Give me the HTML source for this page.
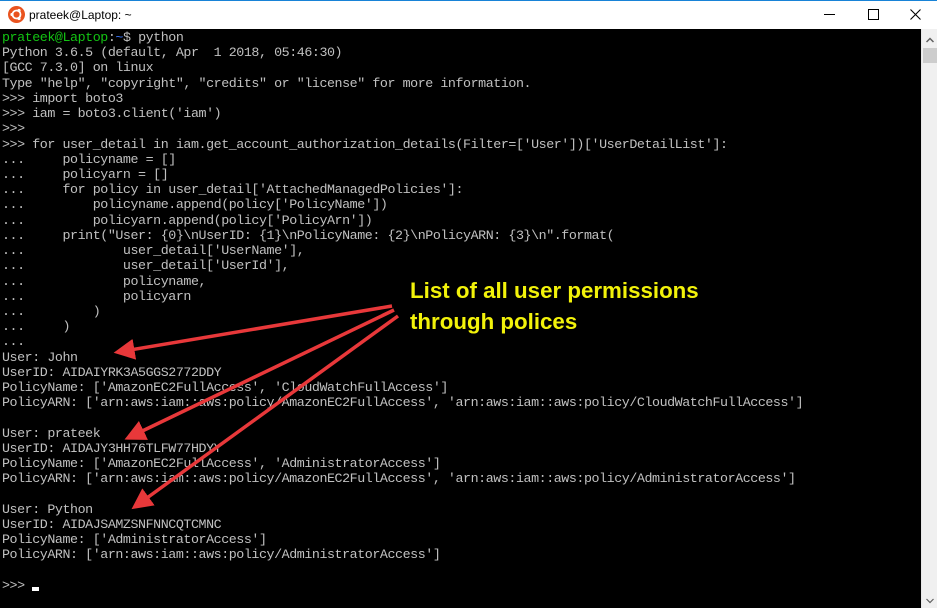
<!DOCTYPE html>
<html><head><meta charset="utf-8"><style>
html,body{margin:0;padding:0;width:937px;height:608px;overflow:hidden;background:#000}
#title{position:absolute;left:0;top:0;width:937px;height:29px;background:#fff;border-top:1px solid #1883d7;box-sizing:border-box;font-family:"Liberation Sans",sans-serif;font-size:12px;color:#000}
#term{position:absolute;left:0;top:30px;width:921px;height:578px;background:#000}
pre{margin:0;position:absolute;left:2px;top:1px;font-family:"Liberation Mono",monospace;font-size:13.33px;letter-spacing:-0.44px;line-height:15.22px;color:#c0c0c0}
.g{color:#13c313}.b{color:#3b78ff}
#sb{position:absolute;left:921px;top:29px;width:16px;height:579px;background:#f0f0f0;border-left:1px solid #e8e8e8}
.ann{position:absolute;left:410px;font-family:"Liberation Sans",sans-serif;font-weight:bold;font-size:22.3px;color:#f2f20a}
</style></head><body>
<div id="title">
<svg style="position:absolute;left:8px;top:5px" width="17" height="17" viewBox="0 0 17 17"><circle cx="8.5" cy="8.5" r="8.5" fill="#e9531f"/><circle cx="8.5" cy="8.5" r="4" fill="none" stroke="#fff" stroke-width="1.8"/><circle cx="4" cy="8.5" r="1.6" fill="#fff"/><circle cx="11" cy="4.5" r="1.6" fill="#fff"/><circle cx="11" cy="12.5" r="1.6" fill="#fff"/></svg>
<span style="position:absolute;left:29px;top:7px">prateek@Laptop: ~</span>
<div style="position:absolute;left:824px;top:13px;width:11px;height:1px;background:#000"></div>
<div style="position:absolute;left:868px;top:8px;width:9px;height:9px;border:1px solid #000"></div>
<svg style="position:absolute;left:910px;top:8px" width="11" height="11"><path d="M0.5 0.5L10.5 10.5M10.5 0.5L0.5 10.5" stroke="#000" stroke-width="1.1"/></svg>
</div>
<div id="term"><pre><span class="g">prateek@Laptop</span>:<span class="b">~</span>$ python
Python 3.6.5 (default, Apr  1 2018, 05:46:30)
[GCC 7.3.0] on linux
Type "help", "copyright", "credits" or "license" for more information.
&gt;&gt;&gt; import boto3
&gt;&gt;&gt; iam = boto3.client('iam')
&gt;&gt;&gt;
&gt;&gt;&gt; for user_detail in iam.get_account_authorization_details(Filter=['User'])['UserDetailList']:
...     policyname = []
...     policyarn = []
...     for policy in user_detail['AttachedManagedPolicies']:
...         policyname.append(policy['PolicyName'])
...         policyarn.append(policy['PolicyArn'])
...     print("User: {0}\nUserID: {1}\nPolicyName: {2}\nPolicyARN: {3}\n".format(
...             user_detail['UserName'],
...             user_detail['UserId'],
...             policyname,
...             policyarn
...         )
...     )
...
User: John
UserID: AIDAIYRK3A5GGS2772DDY
PolicyName: ['AmazonEC2FullAccess', 'CloudWatchFullAccess']
PolicyARN: ['arn:aws:iam::aws:policy/AmazonEC2FullAccess', 'arn:aws:iam::aws:policy/CloudWatchFullAccess']

User: prateek
UserID: AIDAJY3HH76TLFW77HDYY
PolicyName: ['AmazonEC2FullAccess', 'AdministratorAccess']
PolicyARN: ['arn:aws:iam::aws:policy/AmazonEC2FullAccess', 'arn:aws:iam::aws:policy/AdministratorAccess']

User: Python
UserID: AIDAJSAMZSNFNNCQTCMNC
PolicyName: ['AdministratorAccess']
PolicyARN: ['arn:aws:iam::aws:policy/AdministratorAccess']

&gt;&gt;&gt; <span style="display:inline-block;width:7px;height:4px;background:#fff;vertical-align:-2px"></span></pre>
<div class="ann" style="top:248px">List of all user permissions</div>
<div class="ann" style="top:279px">through polices</div>
<svg style="position:absolute;left:0;top:-30px" width="921" height="608">
<defs><marker id="a" markerWidth="6" markerHeight="6" refX="3" refY="3" orient="auto"><path d="M0,0L6,3L0,6z" fill="#e8383a"/></marker></defs>
<g stroke="#e8383a" stroke-width="3.5" fill="none" marker-end="url(#a)">
<line x1="392" y1="306" x2="124" y2="351"/>
<line x1="394" y1="310" x2="134" y2="435"/>
<line x1="398" y1="316" x2="140" y2="503"/>
</g></svg>
</div>
<div id="sb">
<svg style="position:absolute;left:4px;top:8px" width="8" height="6"><path d="M0.5 5L4 1.5L7.5 5" stroke="#606060" stroke-width="1.5" fill="none"/></svg>
<div style="position:absolute;left:1px;top:19px;width:14px;height:15px;background:#cdcdcd"></div>
<svg style="position:absolute;left:4px;top:569px" width="8" height="6"><path d="M0.5 1L4 4.5L7.5 1" stroke="#606060" stroke-width="1.2" fill="none"/></svg>
</div>
</body></html>
